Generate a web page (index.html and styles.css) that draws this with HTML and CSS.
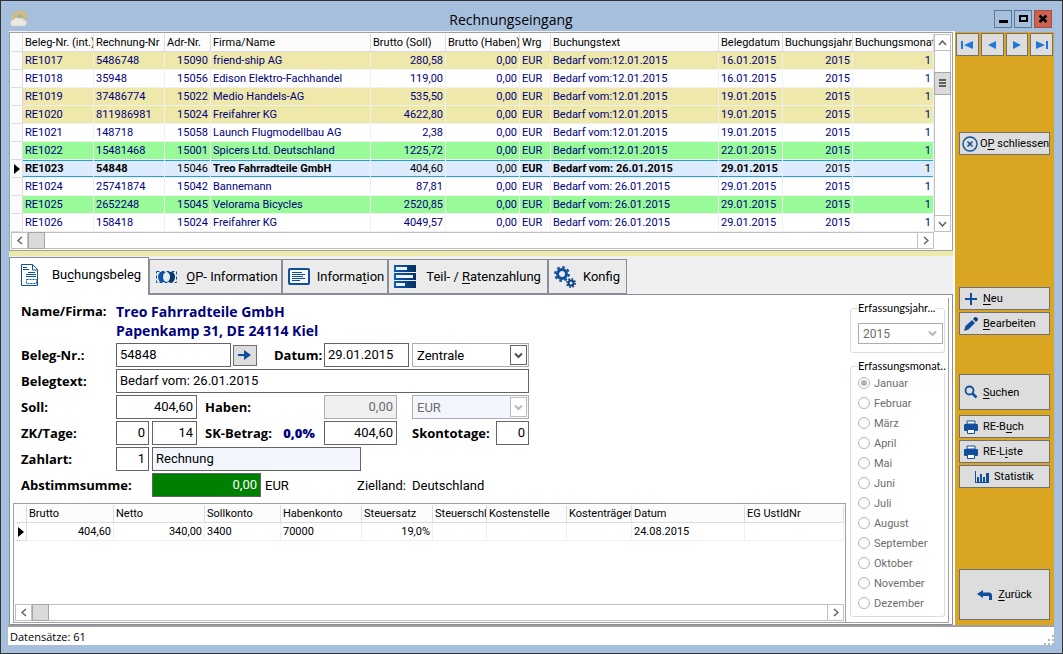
FILE: index.html
```html
<!DOCTYPE html>
<html lang="de">
<head>
  <meta charset="UTF-8">
  <meta name="viewport" content="width=device-width, initial-scale=1.0">
  <title>Rechnungseingang</title>
  <link rel="stylesheet" href="styles.css">
</head>
<body>
  <div class="window">
    <header class="titlebar">
      <svg class="app-icon" width="18" height="18" viewBox="0 0 18 18">
        <g stroke="#f2b632" stroke-width="2"><path d="M10 0v4M5 2l2 3M15 2l-2 3M2.500 6l4 1M17.500 6l-4 1M3.500 9h4"/></g>
        <circle cx="10" cy="7" r="4" fill="#9db8a8" stroke="#f0c04a"/>
        <path d="M3.500 16a3 3 0 0 1 0-6 4 4 0 0 1 6-1.500 3 3 0 0 1 4 1.500 3 3 0 0 1 0 6z" fill="#ece9e4" stroke="#d2cdc6" stroke-width=".6"/>
      </svg>
      <h1>Rechnungseingang</h1>
      <div class="win-buttons">
        <button type="button" aria-label="Minimieren"><svg width="16" height="16"><path d="M4 9h9v3H4z"/></svg></button>
        <button type="button" aria-label="Maximieren"><svg width="16" height="16"><path d="M5 5h7v5H5z" fill="none" stroke="#000" stroke-width="2"/></svg></button>
        <button type="button" class="close" aria-label="Schließen"><svg width="16" height="16"><path d="M4.500 4.500l7 6.500M11.500 4.500l-7 6.500" stroke="#000" stroke-width="2.500"/></svg></button>
      </div>
    </header>

    <div class="main">
      <div class="content">
        <section class="grid-box">
          <div class="grid-body">
            <table class="grid entries">
              <colgroup>
                <col class="w12"><col class="w71"><col class="w71"><col class="w46"><col class="w160"><col class="w75"><col class="w74"><col class="w31"><col class="w168"><col class="w64"><col class="w70"><col>
              </colgroup>
              <thead>
                <tr><th></th><th>Beleg-Nr. (int.)</th><th>Rechnung-Nr</th><th>Adr-Nr.</th><th>Firma/Name</th><th>Brutto (Soll)</th><th>Brutto (Haben)</th><th>Wrg</th><th>Buchungstext</th><th>Belegdatum</th><th>Buchungsjahr</th><th>Buchungsmonat</th></tr>
              </thead>
              <tbody>
                <tr class="khaki"><th></th><td>RE1017</td><td>5486748</td><td class="num">15090</td><td>friend-ship AG</td><td class="num">280,58</td><td class="num">0,00</td><td>EUR</td><td>Bedarf vom:12.01.2015</td><td>16.01.2015</td><td class="num">2015</td><td class="num">1</td></tr>
                <tr><th></th><td>RE1018</td><td>35948</td><td class="num">15056</td><td>Edison Elektro-Fachhandel</td><td class="num">119,00</td><td class="num">0,00</td><td>EUR</td><td>Bedarf vom:12.01.2015</td><td>16.01.2015</td><td class="num">2015</td><td class="num">1</td></tr>
                <tr class="khaki"><th></th><td>RE1019</td><td>37486774</td><td class="num">15022</td><td>Medio Handels-AG</td><td class="num">535,50</td><td class="num">0,00</td><td>EUR</td><td>Bedarf vom:12.01.2015</td><td>19.01.2015</td><td class="num">2015</td><td class="num">1</td></tr>
                <tr class="khaki"><th></th><td>RE1020</td><td>811986981</td><td class="num">15024</td><td>Freifahrer KG</td><td class="num">4622,80</td><td class="num">0,00</td><td>EUR</td><td>Bedarf vom:12.01.2015</td><td>19.01.2015</td><td class="num">2015</td><td class="num">1</td></tr>
                <tr><th></th><td>RE1021</td><td>148718</td><td class="num">15058</td><td>Launch Flugmodellbau AG</td><td class="num">2,38</td><td class="num">0,00</td><td>EUR</td><td>Bedarf vom:12.01.2015</td><td>19.01.2015</td><td class="num">2015</td><td class="num">1</td></tr>
                <tr class="green"><th></th><td>RE1022</td><td>15481468</td><td class="num">15001</td><td>Spicers Ltd. Deutschland</td><td class="num">1225,72</td><td class="num">0,00</td><td>EUR</td><td>Bedarf vom:12.01.2015</td><td>22.01.2015</td><td class="num">2015</td><td class="num">1</td></tr>
                <tr class="selected"><th><span class="marker"></span></th><td>RE1023</td><td>54848</td><td class="num">15046</td><td>Treo Fahrradteile GmbH</td><td class="num">404,60</td><td class="num">0,00</td><td>EUR</td><td>Bedarf vom: 26.01.2015</td><td>29.01.2015</td><td class="num">2015</td><td class="num">1</td></tr>
                <tr><th></th><td>RE1024</td><td>25741874</td><td class="num">15042</td><td>Bannemann</td><td class="num">87,81</td><td class="num">0,00</td><td>EUR</td><td>Bedarf vom: 26.01.2015</td><td>29.01.2015</td><td class="num">2015</td><td class="num">1</td></tr>
                <tr class="green"><th></th><td>RE1025</td><td>2652248</td><td class="num">15045</td><td>Velorama Bicycles</td><td class="num">2520,85</td><td class="num">0,00</td><td>EUR</td><td>Bedarf vom: 26.01.2015</td><td>29.01.2015</td><td class="num">2015</td><td class="num">1</td></tr>
                <tr><th></th><td>RE1026</td><td>158418</td><td class="num">15024</td><td>Freifahrer KG</td><td class="num">4049,57</td><td class="num">0,00</td><td>EUR</td><td>Bedarf vom: 26.01.2015</td><td>29.01.2015</td><td class="num">2015</td><td class="num">1</td></tr>
              </tbody>
            </table>
            <div class="vscroll">
              <button type="button" aria-label="Nach oben"><svg width="9" height="6"><path d="M1 5l3.500-4L8 5"/></svg></button>
              <div class="thumb"><i></i><i></i><i></i></div>
              <button type="button" class="down" aria-label="Nach unten"><svg width="9" height="6"><path d="M1 1l3.500 4L8 1"/></svg></button>
            </div>
          </div>
          <div class="hscroll main-hscroll">
            <button type="button" aria-label="Nach links"><svg width="6" height="9"><path d="M5 1L1 4.500 5 8"/></svg></button>
            <div class="thumb"></div>
            <button type="button" class="right" aria-label="Nach rechts"><svg width="6" height="9"><path d="M1 1l4 3.500L1 8"/></svg></button>
          </div>
        </section>

        <nav class="tabs">
          <button type="button" class="tab active">
            <svg width="20" height="24" viewBox="0 0 20 24" fill="none" stroke="#0f4f9e">
              <path d="M1.500 1.500h11l5 5v16h-16z"/><path d="M12.500 2v5h5M3 4.500h4M3 6.500h6M8 9.500h7M6 11.500h10M6 13.500h10"/><path d="M6.500 16.500h10v4h-10z" stroke-dasharray="2 1"/>
            </svg>
            <span>Bu<u>c</u>hungsbeleg</span>
          </button>
          <button type="button" class="tab">
            <svg width="24" height="16" viewBox="0 0 24 16">
              <defs><linearGradient id="op"><stop offset="0" stop-color="#0c5cb8"/><stop offset="1" stop-color="#06305f"/></linearGradient></defs>
              <path d="M1.500 2.500h20v11h-20z" fill="none" stroke="#0f4f9e" stroke-dasharray="3 2"/>
              <path d="M5 3h13q4 5 0 10H5q-4-5 0-10z" fill="url(#op)"/>
              <ellipse cx="11.500" cy="8" rx="3.500" ry="5" fill="#ebebeb"/>
            </svg>
            <span><u>O</u>P- Information</span>
          </button>
          <button type="button" class="tab">
            <svg width="22" height="18" viewBox="0 0 22 18"><rect x="1" y="1" width="20" height="15" rx="1" fill="#f6f9fd" stroke="#0f4f9e" stroke-width="2"/><path d="M4 4.500h10M4 6.500h13M4 8.500h11M4 10.500h13M4 12.500h8" stroke="#0f4f9e"/></svg>
            <span>Informa<u>t</u>ion</span>
          </button>
          <button type="button" class="tab wide">
            <svg width="22" height="24" viewBox="0 0 22 24">
              <defs><linearGradient id="bar"><stop offset="0" stop-color="#0c5cb8"/><stop offset="1" stop-color="#06305f"/></linearGradient></defs>
              <g fill="url(#bar)"><rect y="0" width="22" height="7"/><rect y="8" width="22" height="7"/><rect y="16" width="22" height="7"/></g>
              <path d="M2 2h11v3H2zM2 10h17v3H2zM2 18h9v3H2z" fill="#eef3fa"/>
            </svg>
            <span>Teil- / <u>R</u>atenzahlung</span>
          </button>
          <button type="button" class="tab last">
            <svg width="22" height="22" viewBox="0 0 22 22" fill="none" stroke="#0f4f9e">
              <circle cx="8" cy="8" r="4.500" stroke-width="3"/><circle cx="8" cy="8" r="6.800" stroke-width="2.200" stroke-dasharray="2.700 2.640"/>
              <circle cx="17" cy="17" r="2.500" stroke-width="2" stroke="#083d80"/><circle cx="17" cy="17" r="4.200" stroke-width="1.600" stroke="#083d80" stroke-dasharray="1.700 1.600"/>
            </svg>
            <span>Konfig</span>
          </button>
        </nav>

        <section class="panel">
          <div class="panel-main">
            <form class="voucher">
              <span class="label">Name/Firma:</span>
              <address class="customer">Treo Fahrradteile GmbH<br>Papenkamp 31, DE 24114 Kiel</address>

              <label class="label" for="beleg">Beleg-Nr.:</label>
              <div class="beleg-group">
                <input type="text" id="beleg" value="54848">
                <button type="button" class="go" aria-label="Beleg öffnen"><svg width="14" height="10"><path d="M0 4h6V0l7 5-7 5V6H0z" fill="#0f4f9e"/></svg></button>
                <label class="label" for="datum">Datum:</label>
              </div>
              <input type="text" id="datum" class="date" value="29.01.2015">
              <div class="select-box">
                <select aria-label="Filiale"><option>Zentrale</option></select>
                <span class="drop"><svg width="9" height="7"><path d="M1 1.500l3.500 3.500L8 1.500"/></svg></span>
              </div>

              <label class="label" for="belegtext">Belegtext:</label>
              <input type="text" id="belegtext" class="full" value="Bedarf vom: 26.01.2015">

              <label class="label" for="soll">Soll:</label>
              <input type="text" id="soll" class="num span2" value="404,60">
              <label class="label" for="haben">Haben:</label>
              <input type="text" id="haben" class="num amount" value="0,00" disabled>
              <div class="select-box off">
                <select aria-label="Währung" disabled><option>EUR</option></select>
                <span class="drop"><svg width="9" height="7"><path d="M1 1.500l3.500 3.500L8 1.500"/></svg></span>
              </div>

              <label class="label" for="zk">ZK/Tage:</label>
              <input type="text" id="zk" class="num small" value="0">
              <input type="text" aria-label="Tage" class="num days" value="14">
              <label class="label sk" for="sk">SK-Betrag: <b>0,0%</b></label>
              <input type="text" id="sk" class="num amount" value="404,60">
              <div class="skonto">
                <label class="label" for="skontotage">Skontotage:</label>
                <input type="text" id="skontotage" class="num small" value="0">
              </div>

              <label class="label" for="zahlart">Zahlart:</label>
              <input type="text" id="zahlart" class="num small" value="1">
              <input type="text" aria-label="Zahlart Text" class="payment" value="Rechnung" readonly>

              <label class="label sum-label" for="abstimm">Abstimmsumme:</label>
              <div class="sum">
                <input type="text" id="abstimm" class="num" value="0,00" readonly>
                <span>EUR</span>
                <span class="country">Zielland:</span>
              </div>
              <span class="country-name">Deutschland</span>
            </form>

            <section class="grid-box bookings">
              <table class="grid">
                <colgroup>
                  <col class="w12"><col class="w87"><col class="w91"><col class="w76"><col class="w81"><col class="w71"><col class="w54"><col class="w80"><col class="w65"><col class="w113"><col>
                </colgroup>
                <thead>
                  <tr><th></th><th>Brutto</th><th>Netto</th><th>Sollkonto</th><th>Habenkonto</th><th>Steuersatz</th><th>Steuerschl</th><th>Kostenstelle</th><th>Kostenträger</th><th>Datum</th><th>EG UstIdNr</th></tr>
                </thead>
                <tbody>
                  <tr><th><span class="marker"></span></th><td class="num">404,60</td><td class="num">340,00</td><td>3400</td><td>70000</td><td class="num">19,0%</td><td></td><td></td><td></td><td>24.08.2015</td><td></td></tr>
                </tbody>
              </table>
              <div class="hscroll">
                <button type="button" aria-label="Nach links"><svg width="6" height="9"><path d="M5 1L1 4.500 5 8"/></svg></button>
                <div class="thumb"></div>
                <button type="button" class="right" aria-label="Nach rechts"><svg width="6" height="9"><path d="M1 1l4 3.500L1 8"/></svg></button>
              </div>
            </section>
          </div>

          <aside class="period">
            <fieldset class="year">
              <legend>Erfassungsjahr...</legend>
              <div class="select-box off">
                <select aria-label="Erfassungsjahr" disabled><option>2015</option></select>
                <span class="drop"><svg width="9" height="7"><path d="M1 1.500l3.500 3.500L8 1.500"/></svg></span>
              </div>
            </fieldset>
            <fieldset class="months" disabled>
              <legend>Erfassungsmonat..</legend>
              <label><input type="radio" name="monat" checked>Januar</label>
              <label><input type="radio" name="monat">Februar</label>
              <label><input type="radio" name="monat">März</label>
              <label><input type="radio" name="monat">April</label>
              <label><input type="radio" name="monat">Mai</label>
              <label><input type="radio" name="monat">Juni</label>
              <label><input type="radio" name="monat">Juli</label>
              <label><input type="radio" name="monat">August</label>
              <label><input type="radio" name="monat">September</label>
              <label><input type="radio" name="monat">Oktober</label>
              <label><input type="radio" name="monat">November</label>
              <label><input type="radio" name="monat">Dezember</label>
            </fieldset>
          </aside>
        </section>
      </div>

      <aside class="sidebar">
        <div class="record-nav">
          <button type="button" aria-label="Erster"><svg width="12" height="10"><path d="M0 1h2v8H0zM12 1v8L3 5z"/></svg></button>
          <button type="button" aria-label="Vorheriger"><svg width="12" height="10"><path d="M10 1v8L2 5z"/></svg></button>
          <button type="button" aria-label="Nächster"><svg width="12" height="10"><path d="M2 1v8l8-4z"/></svg></button>
          <button type="button" aria-label="Letzter"><svg width="12" height="10"><path d="M10 1h2v8h-2zM0 1v8l9-4z"/></svg></button>
        </div>
        <div class="actions op">
          <button type="button"><svg width="16" height="16" fill="none" stroke="#0f4f9e"><circle cx="8" cy="8" r="7" stroke-width="1.400"/><path d="M5.500 5.500l5 5M10.500 5.500l-5 5" stroke-width="1.600"/></svg><span>O<u>P</u> schliessen</span></button>
        </div>
        <div class="actions edit">
          <button type="button"><svg width="14" height="14"><path d="M6 1h2v5h5v2H8v5H6V8H1V6h5z" fill="#0f4f9e"/></svg><span><u>N</u>eu</span></button>
          <button type="button"><svg width="14" height="14"><path d="M0 14l1.500-5L8 3l3 3-6.500 6.500z" fill="#0f4f9e"/><path d="M9 2l2-2q3 0 3 3l-2 2z" fill="#083d80"/></svg><span><u>B</u>earbeiten</span></button>
        </div>
        <div class="actions lists">
          <button type="button" class="search"><svg width="14" height="14" fill="none" stroke="#0f4f9e"><circle cx="5.500" cy="5.500" r="4" stroke-width="1.800"/><path d="M8.500 8.500l4 4" stroke-width="2.500"/></svg><span><u>S</u>uchen</span></button>
          <button type="button"><svg width="14" height="14"><path d="M3 1h8v3H3z" fill="#fff" stroke="#0f4f9e"/><rect y="4" width="14" height="7" rx="1" fill="#0f4f9e"/><path d="M3.500 9.500h7v4h-7z" fill="#fff" stroke="#0f4f9e"/></svg><span>RE-B<u>u</u>ch</span></button>
          <button type="button"><svg width="14" height="14"><path d="M3 1h8v3H3z" fill="#fff" stroke="#0f4f9e"/><rect y="4" width="14" height="7" rx="1" fill="#0f4f9e"/><path d="M3.500 9.500h7v4h-7z" fill="#fff" stroke="#0f4f9e"/></svg><span>RE-L<u>i</u>ste</span></button>
          <button type="button" class="center"><svg width="14" height="14" fill="#0f4f9e"><path d="M0 1h1v11h13v1H0zM2 7h2v5H2zM5 4h2v8H5zM8 7h2v5H8zM11 3h3v9h-3z"/></svg><span>Statistik</span></button>
        </div>
        <div class="actions back">
          <button type="button" class="center"><svg width="16" height="12"><path d="M0 5l6-4v2.500h6q3 0 3 3V11h-3V7H6v2z" fill="#0f4f9e"/></svg><span><u>Z</u>urück</span></button>
        </div>
      </aside>
    </div>

    <footer class="statusbar">
      <span>Datensätze: 61</span>
      <svg width="10" height="10" fill="#b4b4b4"><path d="M8 0h2v2H8zM8 4h2v2H8zM4 4h2v2H4zM8 8h2v2H8zM4 8h2v2H4zM0 8h2v2H0z"/></svg>
    </footer>
  </div>
</body>
</html>
```

FILE: styles.css
```css
* {
  box-sizing: border-box;
}

body {
  margin: 0;
  font-family: Roboto, "Liberation Sans", sans-serif;
  font-size: 11px;
  color: #000;
}

button, input, select {
  font: inherit;
  color: inherit;
  margin: 0;
  padding: 0;
  border-radius: 0;
}

button {
  display: flex;
  align-items: center;
  justify-content: center;
  background: #ddd;
  border: 1px solid #707070;
}

svg {
  display: block;
  flex: none;
}

u {
  text-underline-offset: 2px;
}

.window {
  display: flex;
  flex-direction: column;
  min-height: 100vh;
  padding: 0 8px 8px 7px;
  background: #a6bfdc;
  border: 1px solid #333;
}

/* Titelleiste */
.titlebar {
  display: grid;
  grid-template-columns: 18px 1fr 60px;
  align-items: center;
  height: 30px;
  padding: 6px 0 0 2px;
}

.titlebar h1 {
  margin: 0;
  font: 14px "Open Sans", "Noto Sans", sans-serif;
  text-align: center;
}

.win-buttons {
  display: flex;
  gap: 2px;
}

.win-buttons button {
  width: 18px;
  height: 18px;
  background: #a6bfdc;
  border-color: #5f7797;
}

.win-buttons .close {
  background: #cc6351;
  border-color: #a14f45;
}

.main {
  display: flex;
  flex: 1;
  padding-left: 1px;
}

.content {
  display: flex;
  flex-direction: column;
  flex: 1;
  min-width: 0;
  background: #f0f0f0;
  border-right: 2px solid #fff;
}

/* Tabellen */
.grid-box {
  padding: 1px;
  background: #fff;
  border: 1px solid #a0a0a0;
}

.content > .grid-box {
  margin-top: 1px;
}

.grid-body {
  display: flex;
}

.grid {
  flex: 1;
  width: 100%;
  min-width: 0;
  table-layout: fixed;
  border-collapse: separate;
  border-spacing: 0;
  color: #000;
}

.entries td {
  color: #000080;
}

.grid th,
.grid td {
  height: 18px;
  padding: 1px 2px 0;
  font-weight: normal;
  line-height: 16px;
  text-align: left;
  white-space: nowrap;
  overflow: hidden;
  border-right: 1px solid #f0f0f0;
  border-bottom: 1px solid #f0f0f0;
}

.grid th {
  background: #fcfcfc;
  border-right: 1px solid #dcdcdc;
  border-bottom-color: #dcdcdc;
}

.grid .num {
  text-align: right;
}

.grid tbody th {
  padding: 0;
}

.w12 { width: 12px; }
.w31 { width: 31px; }
.w46 { width: 46px; }
.w54 { width: 54px; }
.w64 { width: 64px; }
.w65 { width: 65px; }
.w70 { width: 70px; }
.w71 { width: 71px; }
.w74 { width: 74px; }
.w75 { width: 75px; }
.w76 { width: 76px; }
.w80 { width: 80px; }
.w81 { width: 81px; }
.w87 { width: 87px; }
.w91 { width: 91px; }
.w113 { width: 113px; }
.w160 { width: 160px; }
.w168 { width: 168px; }

.khaki td {
  background: #eee8aa;
}

.green td {
  background: #98fb98;
}

.selected td {
  color: #000;
  font-weight: bold;
  background: #dcebfd;
  box-shadow: inset 0 1px #26a0da, inset 0 -1px #26a0da;
}

.selected .num {
  font-weight: normal;
}

.marker {
  display: block;
  width: 0;
  margin-left: 3px;
  border: 5px solid transparent;
  border-left: 6px solid #000;
  border-right: 0;
}

/* Bildlaufleisten */
.vscroll {
  display: flex;
  flex-direction: column;
  width: 17px;
  border: 1px solid #c0c0c0;
  border-width: 0 1px;
}

.vscroll button,
.hscroll button {
  background: #fff;
  border: 0 solid #c0c0c0;
}

.vscroll path,
.hscroll path {
  fill: none;
  stroke: #606060;
  stroke-width: 1.5;
}

.vscroll button {
  height: 17px;
  border-width: 1px 0;
}

.vscroll .down {
  margin-top: auto;
}

.thumb {
  background: #dadada;
  border: 1px solid #a6a6a6;
}

.vscroll .thumb {
  display: flex;
  flex-direction: column;
  gap: 1px;
  height: 23px;
  margin: 21px -1px 0;
  padding: 6px 4px;
}

.thumb i {
  height: 2px;
  background: #606060;
}

.hscroll {
  display: flex;
  height: 17px;
  border: 1px solid #c0c0c0;
}

.hscroll button {
  width: 16px;
  border-right-width: 1px;
}

.hscroll .thumb {
  width: 17px;
  margin: -1px 0;
}

.hscroll .right {
  margin-left: auto;
  border-width: 0 0 0 1px;
}

.main-hscroll {
  margin-right: 17px;
}

/* Reiter */
.tabs {
  display: flex;
  align-items: flex-end;
  height: 43px;
  border-top: 5px solid #eee8aa;
  background: #f0f0f0;
}

.tab {
  gap: 7px;
  height: 35px;
  padding: 0 3px 0 5px;
  font-size: 13px;
  white-space: nowrap;
  background: #ebebeb;
  border: 1px solid #8b8c99;
}

.tab.wide {
  gap: 10px;
  padding-right: 6px;
}

.tab.last {
  padding-right: 6px;
}

.tab.active {
  position: relative;
  gap: 12px;
  height: 38px;
  margin-bottom: -1px;
  padding: 0 7px 4px 10px;
  background: #fff;
  border-bottom: 0;
}

/* Belegmaske */
.panel {
  display: flex;
  flex: 1;
  padding: 3px 3px 1px;
  background: #fff;
  border: 1px solid #8b8c99;
}

.panel-main {
  display: flex;
  flex-direction: column;
  flex: 1;
  min-width: 0;
}

.voucher {
  display: grid;
  grid-template-columns: 95px 36px 53px 119px 88px 117px;
  grid-template-rows: 39px;
  grid-auto-rows: 24px;
  row-gap: 2px;
  align-items: center;
  padding: 4px 0 6px 8px;
  font-size: 13px;
}

.label {
  font: bold 13px "Open Sans", "Noto Sans", sans-serif;
  white-space: nowrap;
}

.voucher > .label:first-child {
  align-self: start;
  line-height: 19px;
}

.customer {
  grid-column: 2 / 7;
  align-self: start;
  font: bold 14px/19px "Open Sans", "Noto Sans", sans-serif;
  color: #000080;
}

.voucher input {
  width: 100%;
  height: 24px;
  padding: 0 3px 2px;
  background: #fff;
  border: 1px solid #646464;
}

.voucher .num {
  text-align: right;
}

.voucher input:disabled {
  color: #6d6d6d;
  background: #f0f0f0;
  border-color: #abadb3;
}

.beleg-group {
  display: flex;
  grid-column: 2 / 5;
  align-items: center;
  gap: 2px;
}

.beleg-group input {
  width: 115px;
}

.beleg-group .go {
  width: 24px;
  height: 21px;
}

.beleg-group .label {
  margin-left: 15px;
}

.voucher .date {
  width: 85px;
}

.voucher .full {
  grid-column: 2 / 7;
}

.voucher .span2 {
  grid-column: 2 / 4;
  width: 81px;
}

.voucher .small {
  width: 33px;
}

.voucher .days {
  width: 45px;
}

.voucher .amount {
  width: 73px;
}

.sk b {
  margin-left: 8px;
  color: #000080;
}

.skonto {
  display: flex;
  align-items: center;
  justify-content: space-between;
}

.voucher .payment {
  grid-column: 3 / 7;
  width: 209px;
  background: #f3f7fd;
}

.sum-label {
  grid-column: 1 / 3;
}

.sum {
  display: flex;
  grid-column: 3 / 6;
  align-items: center;
  gap: 4px;
}

.voucher .sum input {
  width: 109px;
  color: #fff;
  background: #008000;
}

.country {
  margin-left: auto;
  margin-right: 6px;
}

.select-box {
  position: relative;
}

.select-box select {
  display: block;
  width: 100%;
  height: 24px;
  padding-left: 4px;
  appearance: none;
  background: #fff;
  border: 1px solid #abadb3;
  opacity: 1;
}

.drop {
  display: flex;
  position: absolute;
  top: 2px;
  right: 2px;
  bottom: 2px;
  align-items: center;
  justify-content: center;
  width: 17px;
  border: 1px solid #646464;
  pointer-events: none;
}

.drop path {
  fill: none;
  stroke: #505050;
  stroke-width: 2;
}

.off select {
  color: #6d6d6d;
  background: #f3f7fd;
}

.off .drop {
  background: #fff;
  border-color: #c0c0c0;
}

.off .drop path {
  stroke: #b8b8b8;
}

.bookings {
  display: flex;
  flex: 1;
  flex-direction: column;
}

.bookings .grid {
  flex: none;
}

.bookings .hscroll {
  margin-top: auto;
}

.period {
  width: 103px;
  padding: 0 3px 4px 4px;
  border-right: 1px solid #a0a0a0;
  border-bottom: 1px solid #a0a0a0;
}

fieldset {
  min-width: 0;
  margin: 0;
  padding: 0 0 0 7px;
  border: 1px solid #d5dfe5;
  border-radius: 3px;
}

legend {
  height: 14px;
  padding: 0;
  font-family: Lato, sans-serif;
  line-height: 14px;
  white-space: nowrap;
}

.year {
  height: 52px;
  margin: 3px 0 6px;
}

.year .select-box {
  width: 85px;
  margin-top: 8px;
  font-size: 12px;
}

.year select {
  height: 21px;
  background: #fff;
}

.year .drop {
  border: 0;
}

.months {
  padding-bottom: 3px;
}

.months label {
  display: flex;
  align-items: center;
  gap: 4px;
  height: 20px;
  color: #6d6d6d;
}

.months input {
  display: grid;
  place-items: center;
  width: 12px;
  height: 12px;
  appearance: none;
  background: #fff;
  border: 1px solid #b0b4b6;
  border-radius: 50%;
}

.months input:checked::before {
  content: "";
  width: 6px;
  height: 6px;
  background: #b4b4b4;
  border-radius: 50%;
}

/* Seitenleiste */
.sidebar {
  display: flex;
  flex-direction: column;
  width: 99px;
  margin-top: 1px;
  padding: 1px 1px 5px;
  background: #daa520;
}

.record-nav {
  display: flex;
  gap: 2px;
}

.record-nav button {
  flex: 1;
  height: 23px;
}

.record-nav path {
  fill: #1f78d8;
}

.actions {
  display: flex;
  flex-direction: column;
  gap: 2px;
  margin: 0 3px;
}

.actions button {
  justify-content: flex-start;
  gap: 5px;
  height: 23px;
  padding-left: 4px;
  white-space: nowrap;
}

.actions .center {
  justify-content: center;
  padding: 0;
}

.actions.op {
  margin-top: 76px;
}

.op button {
  gap: 2px;
  padding-left: 2px;
}

.actions.edit {
  margin-top: 132px;
}

.actions.lists {
  margin-top: 39px;
}

.actions .search {
  height: 36px;
  margin-bottom: 3px;
}

.actions.back {
  margin-top: auto;
}

.back button {
  height: 51px;
}

.statusbar {
  display: flex;
  align-items: center;
  justify-content: space-between;
  height: 20px;
  padding-left: 2px;
  font: 11px "Open Sans", "Noto Sans", sans-serif;
  background: #fff;
  border-top: 2px solid #a0a0a0;
}

.statusbar svg {
  align-self: flex-end;
}
```
